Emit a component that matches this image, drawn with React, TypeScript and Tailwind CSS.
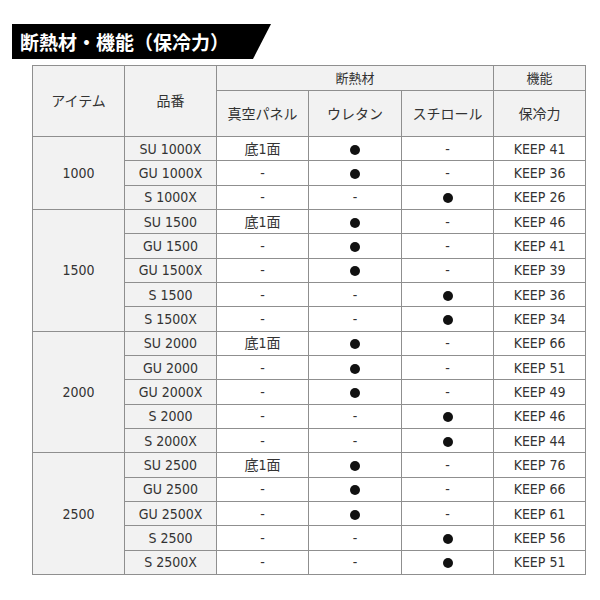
import React from "react";

type Row = {
  code: string;
  panel: string;
  urethane: boolean;
  styro: boolean;
  keep: number;
};

type Group = {
  item: string;
  rows: Row[];
};

const groups: Group[] = [
  {
    item: "1000",
    rows: [
      { code: "SU 1000X", panel: "底1面", urethane: true, styro: false, keep: 41 },
      { code: "GU 1000X", panel: "-", urethane: true, styro: false, keep: 36 },
      { code: "S 1000X", panel: "-", urethane: false, styro: true, keep: 26 },
    ],
  },
  {
    item: "1500",
    rows: [
      { code: "SU 1500", panel: "底1面", urethane: true, styro: false, keep: 46 },
      { code: "GU 1500", panel: "-", urethane: true, styro: false, keep: 41 },
      { code: "GU 1500X", panel: "-", urethane: true, styro: false, keep: 39 },
      { code: "S 1500", panel: "-", urethane: false, styro: true, keep: 36 },
      { code: "S 1500X", panel: "-", urethane: false, styro: true, keep: 34 },
    ],
  },
  {
    item: "2000",
    rows: [
      { code: "SU 2000", panel: "底1面", urethane: true, styro: false, keep: 66 },
      { code: "GU 2000", panel: "-", urethane: true, styro: false, keep: 51 },
      { code: "GU 2000X", panel: "-", urethane: true, styro: false, keep: 49 },
      { code: "S 2000", panel: "-", urethane: false, styro: true, keep: 46 },
      { code: "S 2000X", panel: "-", urethane: false, styro: true, keep: 44 },
    ],
  },
  {
    item: "2500",
    rows: [
      { code: "SU 2500", panel: "底1面", urethane: true, styro: false, keep: 76 },
      { code: "GU 2500", panel: "-", urethane: true, styro: false, keep: 66 },
      { code: "GU 2500X", panel: "-", urethane: true, styro: false, keep: 61 },
      { code: "S 2500", panel: "-", urethane: false, styro: true, keep: 56 },
      { code: "S 2500X", panel: "-", urethane: false, styro: true, keep: 51 },
    ],
  },
];

const cell = "border border-[#8f8f8f] text-center align-middle p-0";

const Mark: React.FC<{ on: boolean }> = ({ on }) =>
  on ? (
    <span className="inline-block w-[10px] h-[10px] rounded-full bg-[#111] align-middle" />
  ) : (
    <span>-</span>
  );

const App: React.FC = () => {
  return (
    <div
      className="w-[600px] h-[600px] bg-white pt-[24px] text-[#333]"
      style={{ fontFamily: '"DejaVu Sans Condensed", "Liberation Sans", "Noto Sans CJK JP", sans-serif' }}
    >
      {/* Title banner */}
      <div className="ml-[12px] w-[259px] h-[35px] bg-black flex items-center pl-[8px] [clip-path:polygon(0_0,100%_0,calc(100%-18px)_100%,0_100%)]">
        <h2
          className="text-white text-[19px] font-bold leading-none"
          style={{ fontFamily: '"Noto Sans CJK JP", sans-serif' }}
        >
          断熱材・機能（保冷力）
        </h2>
      </div>

      <table className="mt-[6px] ml-[32px] border-collapse table-fixed w-[553px] text-[14px] leading-none">
        <colgroup>
          <col className="w-[92px]" />
          <col className="w-[92px]" />
          <col className="w-[92px]" />
          <col className="w-[93px]" />
          <col className="w-[92px]" />
          <col className="w-[92px]" />
        </colgroup>
        <thead className="bg-[#f2f2f2]">
          <tr className="h-[25px]">
            <th rowSpan={2} className={`${cell} font-normal`}>
              アイテム
            </th>
            <th rowSpan={2} className={`${cell} font-normal`}>
              品番
            </th>
            <th colSpan={3} className={`${cell} font-normal text-[13px]`}>
              断熱材
            </th>
            <th className={`${cell} font-normal text-[13px]`}>機能</th>
          </tr>
          <tr className="h-[46px]">
            <th className={`${cell} font-normal`}>真空パネル</th>
            <th className={`${cell} font-normal`}>ウレタン</th>
            <th className={`${cell} font-normal`}>スチロール</th>
            <th className={`${cell} font-normal`}>保冷力</th>
          </tr>
        </thead>
        <tbody>
          {groups.map((g) =>
            g.rows.map((r, i) => (
              <tr key={r.code} className="h-[24.33px]">
                {i === 0 && (
                  <td rowSpan={g.rows.length} className={`${cell} bg-[#f2f2f2]`}>
                    {g.item}
                  </td>
                )}
                <td className={`${cell} bg-[#f2f2f2]`}>{r.code}</td>
                <td className={`${cell} bg-white`}>{r.panel}</td>
                <td className={`${cell} bg-white`}>
                  <Mark on={r.urethane} />
                </td>
                <td className={`${cell} bg-white`}>
                  <Mark on={r.styro} />
                </td>
                <td className={`${cell} bg-white`}>KEEP {r.keep}</td>
              </tr>
            ))
          )}
        </tbody>
      </table>
    </div>
  );
};

export default App;
